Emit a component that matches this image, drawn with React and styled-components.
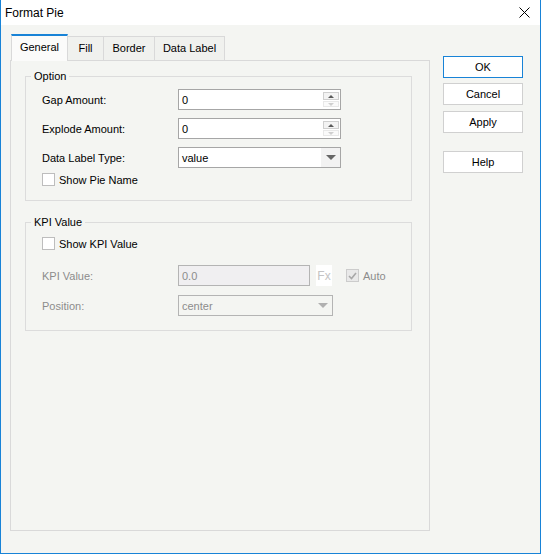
import React from "react";
import styled, { createGlobalStyle } from "styled-components";

const GlobalStyle = createGlobalStyle`
  html, body {
    margin: 0;
    padding: 0;
  }
  body {
    font-family: "Liberation Sans", Arial, sans-serif;
    font-size: 11px;
    color: #000;
  }
`;

const Window = styled.div`
  width: 541px;
  height: 554px;
  box-sizing: border-box;
  border: 1px solid #1883d7;
  border-top: none;
  background: #f4f5f2;
  display: flex;
  flex-direction: column;
`;

const TitleBar = styled.div`
  height: 25px;
  background: #fff;
  display: flex;
  align-items: center;
  justify-content: space-between;
  padding: 0 10px 0 4px;
  font-size: 12px;
`;

const CloseIcon = () => (
  <svg width="11" height="11" viewBox="0 0 11 11">
    <path d="M0.5 0.5L10.5 10.5M10.5 0.5L0.5 10.5" stroke="#000" strokeWidth="1" />
  </svg>
);

const Body = styled.div`
  flex: 1;
  display: flex;
  padding: 9px 0 0 9px;
`;

const Left = styled.div`
  display: flex;
  flex-direction: column;
  width: 420px;
`;

const TabStrip = styled.div`
  display: flex;
  align-items: flex-end;
  height: 26px;
  padding-left: 1px;
`;

const Tab = styled.div`
  width: ${({ w }) => w}px;
  height: ${({ active }) => (active ? "27px" : "24px")};
  box-sizing: border-box;
  display: flex;
  align-items: center;
  justify-content: center;
  background: ${({ active }) => (active ? "#fbfbfa" : "#f0f1ee")};
  border: 1px solid #d9d9d9;
  border-top: ${({ active }) => (active ? "2px solid #1883d7" : "1px solid #d9d9d9")};
  border-bottom: none;
  border-left: ${({ first }) => (first ? "1px solid #d9d9d9" : "none")};
  margin-bottom: ${({ active }) => (active ? "-1px" : "0")};
  padding-bottom: ${({ active }) => (active ? "3px" : "1px")};
  position: relative;
  z-index: ${({ active }) => (active ? 1 : 0)};
`;

const Panel = styled.div`
  height: 471px;
  box-sizing: border-box;
  border: 1px solid #d9d9d9;
  padding: 9px 17px 0 14px;
  display: flex;
  flex-direction: column;
  gap: 15px;
`;

const Group = styled.fieldset`
  margin: 0;
  padding: 0;
  border: 1px solid #dcdcdc;
  height: ${({ h }) => h}px;
  box-sizing: border-box;
`;

const Legend = styled.legend`
  margin-left: 5px;
  padding: 0 3px;
  font-size: 11px;
  line-height: 13px;
`;

const Rows = styled.div`
  display: flex;
  flex-direction: column;
  padding: ${({ top }) => top}px 0 0 16px;
`;

const Row = styled.div`
  display: flex;
  align-items: center;
  height: 21px;
  margin-top: ${({ mt }) => mt || 0}px;
  margin-bottom: ${({ mb }) => (mb === undefined ? 8 : mb)}px;
`;

const Label = styled.div`
  width: 136px;
  color: ${({ disabled }) => (disabled ? "#8c8c8c" : "#000")};
`;

const Field = styled.div`
  width: ${({ w }) => w}px;
  height: 21px;
  box-sizing: border-box;
  border: 1px solid ${({ disabled }) => (disabled ? "#b4b4b4" : "#a6a6a6")};
  background: ${({ bg }) => bg || "#fff"};
  display: flex;
  align-items: center;
  color: ${({ disabled }) => (disabled ? "#8c8c8c" : "#000")};
  padding-left: 3px;
`;

const FieldText = styled.span`
  flex: 1;
`;

const Spinner = styled.div`
  display: flex;
  flex-direction: column;
  gap: 1px;
  margin-right: 1px;
  width: 16px;
`;

const SpinButton = styled.div`
  height: ${({ up }) => (up ? 8 : 6)}px;
  box-sizing: border-box;
  border: 1px solid ${({ up }) => (up ? "#cfcfcf" : "#e8e8e8")};
  background: ${({ up }) => (up ? "#f3f3f3" : "#fafafa")};
  display: flex;
  align-items: center;
  justify-content: center;
`;

const Arrow = styled.div`
  width: 0;
  height: 0;
  border-left: ${({ s }) => s}px solid transparent;
  border-right: ${({ s }) => s}px solid transparent;
  ${({ up, s, color }) =>
    up
      ? `border-bottom: ${s}px solid ${color};`
      : `border-top: ${s}px solid ${color};`}
`;

const DropButton = styled.div`
  width: 19px;
  align-self: stretch;
  background: ${({ disabled }) => (disabled ? "transparent" : "#f2f2f2")};
  display: flex;
  align-items: center;
  justify-content: center;
`;

const CheckRow = styled.label`
  display: flex;
  align-items: center;
  gap: 4px;
  height: 13px;
  color: ${({ disabled }) => (disabled ? "#8c8c8c" : "#000")};
`;

const Box = styled.span`
  width: 13px;
  height: 13px;
  box-sizing: border-box;
  border: 1px solid ${({ disabled }) => (disabled ? "#cccccc" : "#bdbdbd")};
  background: ${({ disabled }) => (disabled ? "#e9e9e9" : "#fff")};
  display: inline-flex;
  align-items: center;
  justify-content: center;
`;

const Fx = styled.span`
  width: 16px;
  height: 21px;
  margin: 0 14px 0 6px;
  background: #fff;
  color: #c4c4c4;
  font-size: 12px;
  display: flex;
  align-items: center;
  justify-content: center;
`;

const Side = styled.div`
  display: flex;
  flex-direction: column;
  margin: 22px 0 0 13px;
`;

const Button = styled.button`
  width: 80px;
  height: 22px;
  box-sizing: border-box;
  margin: 0 0 ${({ mb }) => mb}px 0;
  background: #fff;
  border: 1px solid ${({ primary }) => (primary ? "#1883d7" : "#d0d0d0")};
  font-family: "Liberation Sans", Arial, sans-serif;
  font-size: 11px;
  color: #000;
  padding: 0;
`;

const Check = () => (
  <svg width="9" height="8" viewBox="0 0 9 8">
    <path d="M1 4L3.5 6.5L8 1" fill="none" stroke="#a8a8a8" strokeWidth="1.6" />
  </svg>
);

const SpinField = ({ value }) => (
  <Field w={163}>
    <FieldText>{value}</FieldText>
    <Spinner>
      <SpinButton up>
        <Arrow up s={3} color="#5a5a5a" />
      </SpinButton>
      <SpinButton>
        <Arrow s={3} color="#cfcfcf" />
      </SpinButton>
    </Spinner>
  </Field>
);

const Select = ({ value, w, disabled }) => (
  <Field w={w} disabled={disabled} bg={disabled ? "#f4f5f2" : "#fff"}>
    <FieldText>{value}</FieldText>
    <DropButton disabled={disabled}>
      <Arrow s={5} color={disabled ? "#b0b0b0" : "#666"} />
    </DropButton>
  </Field>
);

const tabs = [
  { name: "General", w: 57 },
  { name: "Fill", w: 36 },
  { name: "Border", w: 51 },
  { name: "Data Label", w: 70 },
];

export default function App() {
  return (
    <>
      <GlobalStyle />
      <Window>
        <TitleBar>
          <span>Format Pie</span>
          <CloseIcon />
        </TitleBar>
        <Body>
          <Left>
            <TabStrip>
              {tabs.map((t, i) => (
                <Tab key={t.name} active={i === 0} first={i === 0} w={t.w}>
                  {t.name}
                </Tab>
              ))}
            </TabStrip>
            <Panel>
              <Group h={131}>
                <Legend>Option</Legend>
                <Rows top={6}>
                  <Row>
                    <Label>Gap Amount:</Label>
                    <SpinField value="0" />
                  </Row>
                  <Row>
                    <Label>Explode Amount:</Label>
                    <SpinField value="0" />
                  </Row>
                  <Row mb={5}>
                    <Label>Data Label Type:</Label>
                    <Select value="value" w={163} />
                  </Row>
                  <CheckRow>
                    <Box />
                    Show Pie Name
                  </CheckRow>
                </Rows>
              </Group>
              <Group h={115}>
                <Legend>KPI Value</Legend>
                <Rows top={8}>
                  <CheckRow>
                    <Box />
                    Show KPI Value
                  </CheckRow>
                  <Row mt={15} mb={9}>
                    <Label disabled>KPI Value:</Label>
                    <Field w={132} disabled bg="#f0eff1">
                      <FieldText>0.0</FieldText>
                    </Field>
                    <Fx>Fx</Fx>
                    <CheckRow disabled>
                      <Box disabled>
                        <Check />
                      </Box>
                      Auto
                    </CheckRow>
                  </Row>
                  <Row mb={0}>
                    <Label disabled>Position:</Label>
                    <Select value="center" w={155} disabled />
                  </Row>
                </Rows>
              </Group>
            </Panel>
          </Left>
          <Side>
            <Button primary mb={5}>OK</Button>
            <Button mb={6}>Cancel</Button>
            <Button mb={18}>Apply</Button>
            <Button mb={0}>Help</Button>
          </Side>
        </Body>
      </Window>
    </>
  );
}
